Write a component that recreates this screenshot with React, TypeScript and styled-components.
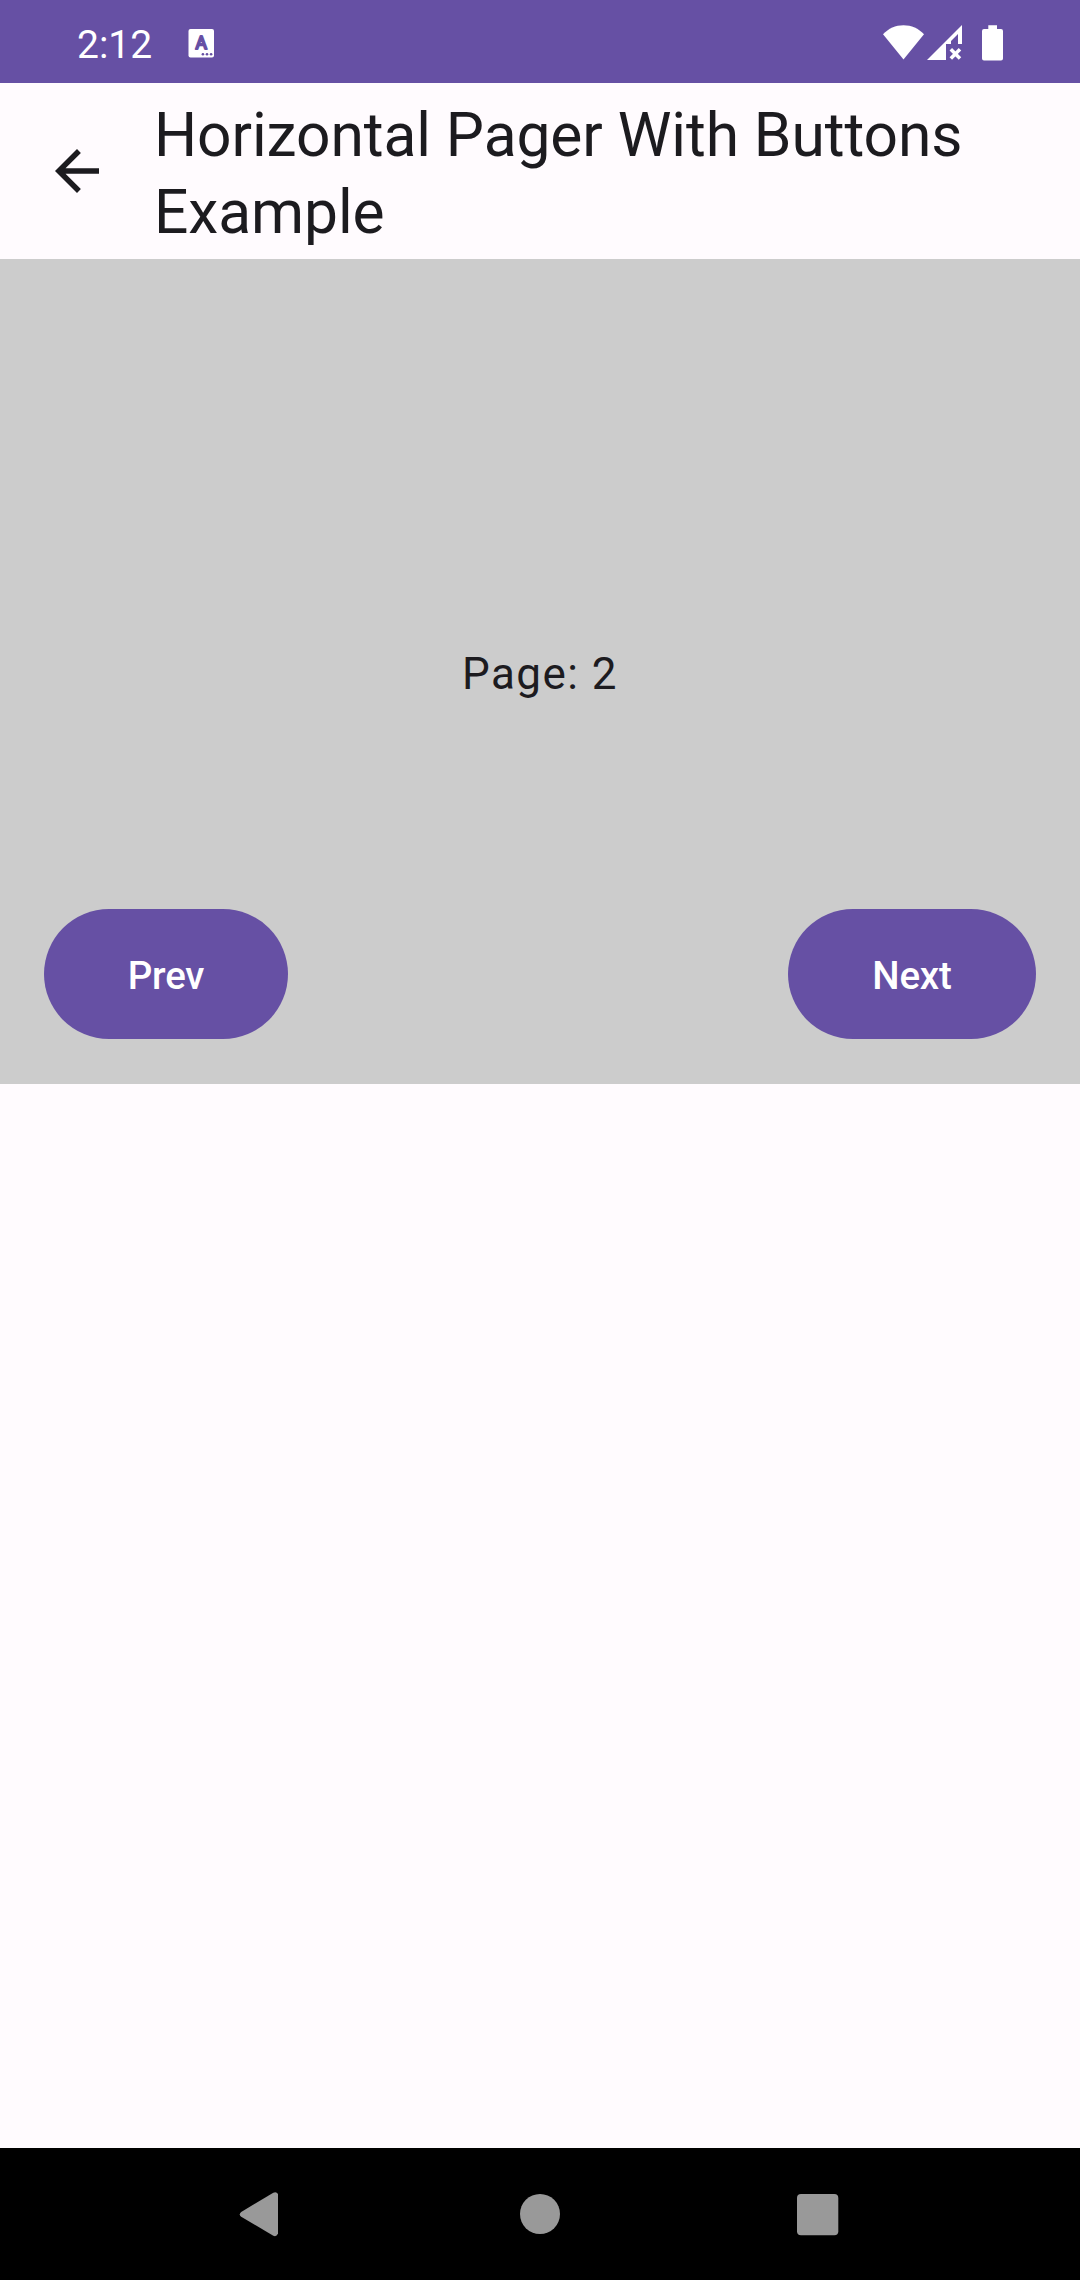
import React, { useState } from "react";
import styled, { createGlobalStyle } from "styled-components";

const colors = {
  primary: "#6650a4",
  onPrimary: "#ffffff",
  background: "#fffbfe",
  onBackground: "#1c1b1f",
  pager: "#cccccc",
  navIcon: "#999999",
};

const GlobalStyle = createGlobalStyle`
  body {
    margin: 0;
    font-family: Roboto, "Noto Sans", sans-serif;
    background: ${colors.background};
    color: ${colors.onBackground};
  }
`;

const Screen = styled.div`
  display: flex;
  flex-direction: column;
  width: 1080px;
  height: 2280px;
  overflow: hidden;
`;

const StatusBar = styled.header`
  display: flex;
  align-items: flex-start;
  justify-content: space-between;
  box-sizing: border-box;
  height: 83px;
  padding: 22px 76px 0 77px;
  background: ${colors.primary};
  color: ${colors.onPrimary};
`;

const StatusGroup = styled.div`
  display: flex;
  align-items: flex-start;
`;

const Clock = styled.span`
  width: 111px;
  padding-top: 1px;
  font-size: 39px;
  line-height: 45px;
`;

const Glyph = styled.svg<{ $top: number; $left?: number }>`
  display: block;
  margin-top: ${(p) => p.$top}px;
  margin-left: ${(p) => p.$left ?? 0}px;
  fill: currentColor;
`;

const AppBar = styled.div`
  display: flex;
  align-items: center;
  height: 176px;
  padding-left: 44px;
`;

const IconButton = styled.button`
  display: flex;
  width: 110px;
  padding: 0;
  border: 0;
  background: none;
  color: inherit;
`;

const Title = styled.h1`
  flex: 1;
  margin: 0;
  padding-top: 6px;
  font-size: 60.5px;
  font-weight: 400;
  line-height: 77px;
  letter-spacing: -0.08px;
`;

const Pager = styled.main`
  display: grid;
  grid-template-rows: 1fr auto 1fr;
  height: 825px;
  background: ${colors.pager};
`;

const PageLabel = styled.p`
  grid-row: 2;
  margin: 0;
  padding-top: 4px;
  font-size: 44px;
  line-height: 66px;
  letter-spacing: 1.45px;
  text-align: center;
`;

const PagerControls = styled.div`
  grid-row: 3;
  display: flex;
  align-items: flex-end;
  justify-content: space-between;
  padding: 0 44px 45px;
`;

const PagerButton = styled.button<{ $width: number }>`
  width: ${(p) => p.$width}px;
  height: 130px;
  padding: 2px 0 0;
  border: 0;
  border-radius: 65px;
  background: ${colors.primary};
  color: ${colors.onPrimary};
  font-family: inherit;
  font-size: 38.5px;
  font-weight: 500;
  line-height: 55px;
  letter-spacing: -0.2px;
`;

const Blank = styled.div`
  flex: 1;
`;

const NavigationBar = styled.nav`
  display: grid;
  grid-template-columns: repeat(3, 278px);
  justify-content: center;
  align-items: center;
  justify-items: center;
  height: 132px;
  background: #000;
  color: ${colors.navIcon};
`;

const NavIcon = styled.svg`
  display: block;
  width: 66px;
  height: 66px;
  fill: currentColor;
`;

export default function App() {
  const [page, setPage] = useState(2);

  return (
    <Screen>
      <GlobalStyle />
      <StatusBar>
        <StatusGroup>
          <Clock>2:12</Clock>
          <Glyph $top={7} width="27" height="29" viewBox="0 0 27 29">
            <rect x="0.5" y="0" width="25.5" height="28.5" rx="2" />
            <text
              x="13.2"
              y="20.2"
              textAnchor="middle"
              fontFamily="Roboto, sans-serif"
              fontSize="17.5"
              fontWeight="400"
              fill={colors.primary}
              stroke={colors.primary}
              strokeWidth="2"
              strokeLinejoin="round"
            >
              A
            </text>
            <g fill={colors.primary}>
              <circle cx="14.9" cy="25.2" r="1.3" />
              <circle cx="19" cy="25.2" r="1.3" />
              <circle cx="23.1" cy="25.2" r="1.3" />
            </g>
          </Glyph>
        </StatusGroup>
        <StatusGroup>
          <Glyph $top={3} width="42" height="35" viewBox="0 0 42 35">
            <path d="M20.5 34.5 L0 9.2 C5.5 3.6 12.5 0.3 20.5 0.3 S35.5 3.6 41 9.2 Z" />
          </Glyph>
          <Glyph $top={3} $left={2} width="36" height="36" viewBox="0 0 36 36">
            <path d="M35 0 V19 H31 V9 L24 16 V19 H19 V35 H0 Z" />
            <path
              d="M23.8 24.2 L33 33.4 M33 24.2 L23.8 33.4"
              fill="none"
              stroke="currentColor"
              strokeWidth="3.5"
            />
          </Glyph>
          <Glyph $top={3} $left={19} width="22" height="36" viewBox="0 0 22 36">
            <path d="M6.3 0.3 H15 V4 H19 Q21 4 21 6 V33.6 Q21 35.6 19 35.6 H2 Q0 35.6 0 33.6 V6 Q0 4 2 4 H6.3 Z" />
          </Glyph>
        </StatusGroup>
      </StatusBar>

      <AppBar>
        <IconButton aria-label="Back">
          <Glyph $top={0} width="66" height="66" viewBox="0 0 24 24">
            <path d="M20 11H7.83l5.59-5.59L12 4l-8 8 8 8 1.41-1.41L7.83 13H20v-2z" />
          </Glyph>
        </IconButton>
        <Title>
          Horizontal Pager With Buttons
          <br />
          Example
        </Title>
      </AppBar>

      <Pager>
        <PageLabel>Page: {page}</PageLabel>
        <PagerControls>
          <PagerButton $width={244} onClick={() => setPage(Math.max(0, page - 1))}>
            Prev
          </PagerButton>
          <PagerButton $width={248} onClick={() => setPage(page + 1)}>
            Next
          </PagerButton>
        </PagerControls>
      </Pager>

      <Blank />

      <NavigationBar>
        <NavIcon viewBox="0 0 66 66">
          <path d="M12.2 31 L44.3 11.7 Q47.3 10.2 49 13 V52.5 Q47.3 56.2 44.3 54.7 L12.2 35.8 Q9.3 33.4 12.2 31 Z" />
        </NavIcon>
        <NavIcon viewBox="0 0 66 66">
          <circle cx="33" cy="33" r="20" />
        </NavIcon>
        <NavIcon viewBox="0 0 66 66">
          <rect x="12" y="13" width="41.3" height="41.3" rx="4" />
        </NavIcon>
      </NavigationBar>
    </Screen>
  );
}
